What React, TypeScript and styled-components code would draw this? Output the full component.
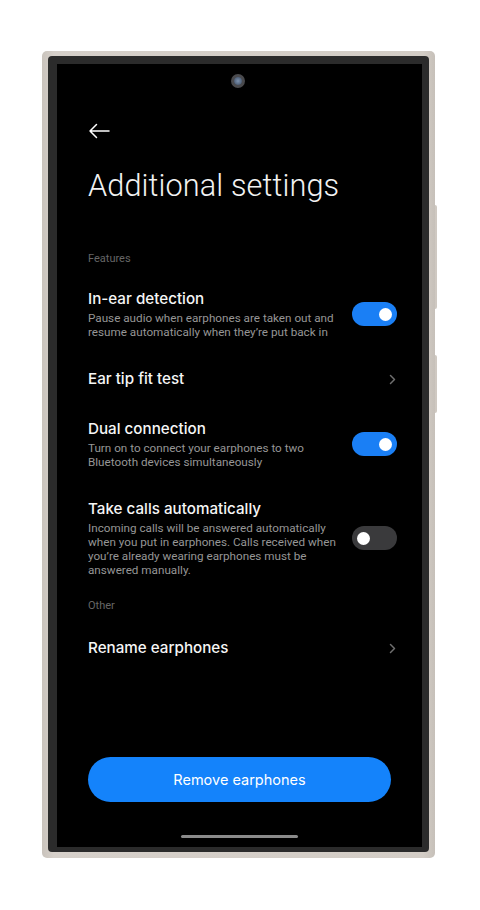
import React from "react";
import styled, { createGlobalStyle } from "styled-components";

const GlobalStyle = createGlobalStyle`
  html, body {
    margin: 0;
    padding: 0;
    background: #ffffff;
  }
  body {
    font-family: Roboto, "Noto Sans", "Liberation Sans", sans-serif;
    -webkit-font-smoothing: antialiased;
  }
`;

const Page = styled.div`
  width: 480px;
  height: 910px;
  padding: 51px 0 0 42px;
  box-sizing: border-box;
`;

const Frame = styled.div`
  position: relative;
  width: 393px;
  height: 807px;
  box-sizing: border-box;
  padding: 5px 6px 6px 6px;
  border-radius: 5px;
  background: linear-gradient(90deg, #c9c3bc 0%, #d6d0ca 3%, #d3cdc6 97%, #c6c0b9 100%);

  &::before,
  &::after {
    content: "";
    position: absolute;
    right: -2px;
    width: 2px;
    border-radius: 0 2px 2px 0;
    background: #cfc9c2;
  }
  &::before {
    top: 154px;
    height: 104px;
  }
  &::after {
    top: 304px;
    height: 58px;
  }
`;

const Bezel = styled.div`
  width: 100%;
  height: 100%;
  box-sizing: border-box;
  padding: 8px 7px 5px 9px;
  border-radius: 4px;
  background: #2b2b2b;
`;

const Screen = styled.div`
  position: relative;
  height: 100%;
  box-sizing: border-box;
  background: #000000;
  display: flex;
  flex-direction: column;
  padding: 0 25px 9px 31px;
  color: #ffffff;
`;

const Camera = styled.div`
  position: absolute;
  left: 174px;
  top: 10px;
  width: 14px;
  height: 14px;
  border-radius: 50%;
  box-sizing: border-box;
  border: 3px solid #4a4a4d;
  background: radial-gradient(circle, #7d93b0 0%, #56677f 60%, #2c3340 100%);
`;

const BackButton = styled.button`
  margin-top: 55px;
  width: 24px;
  height: 24px;
  padding: 0;
  border: none;
  background: none;
  display: flex;
  align-items: center;
  color: #ffffff;
`;

const Title = styled.h1`
  margin: 23px 0 0;
  font-size: 30.7px;
  line-height: 40px;
  font-weight: 300;
  letter-spacing: 0.1px;
  color: #f2f2f2;
`;

const SectionLabel = styled.div<{ $top: number; $bottom: number }>`
  margin: ${(p) => p.$top}px 0 ${(p) => p.$bottom}px;
  font-size: 11px;
  line-height: 16px;
  color: #666666;
`;

const Item = styled.div`
  display: flex;
  align-items: center;
  gap: 8px;
  padding: 15px 0;
`;

const ItemText = styled.div`
  flex: 1;
  min-width: 0;
`;

const ItemTitle = styled.div`
  font-family: Inter, Roboto, sans-serif;
  font-size: 15.2px;
  line-height: 20px;
  font-weight: 500;
  color: #f6f6f6;
`;

const ItemDesc = styled.div`
  margin-top: 2px;
  font-size: 11.7px;
  line-height: 14px;
  color: #969696;
`;

const Toggle = styled.div<{ $on: boolean }>`
  flex: none;
  width: 45px;
  height: 24px;
  border-radius: 12px;
  box-sizing: border-box;
  padding: 0 5px;
  display: flex;
  align-items: center;
  justify-content: ${(p) => (p.$on ? "flex-end" : "flex-start")};
  background: ${(p) => (p.$on ? "#1a7ff5" : "#3a3a3c")};

  &::after {
    content: "";
    width: 13px;
    height: 13px;
    border-radius: 50%;
    background: #ffffff;
  }
`;

const Chevron = styled.svg`
  flex: none;
  margin-right: 1px;
`;

const Spacer = styled.div`
  flex: 1;
`;

const PrimaryButton = styled.button`
  align-self: center;
  margin-left: -6px;
  width: 303px;
  height: 45px;
  border: none;
  border-radius: 23px;
  background: #1483fb;
  color: #ffffff;
  font-family: Inter, Roboto, sans-serif;
  font-size: 14.5px;
  font-weight: 400;
`;

const HomeBar = styled.div`
  align-self: center;
  margin: 33px 0 0 -6px;
  width: 117px;
  height: 3px;
  border-radius: 2px;
  background: #8a8a8a;
`;

type Setting = {
  title: string;
  desc?: string;
  toggle?: boolean;
};

const features: Setting[] = [
  {
    title: "In-ear detection",
    desc: "Pause audio when earphones are taken out and resume automatically when they\u2019re put back in",
    toggle: true,
  },
  { title: "Ear tip fit test" },
  {
    title: "Dual connection",
    desc: "Turn on to connect your earphones to two Bluetooth devices simultaneously",
    toggle: true,
  },
  {
    title: "Take calls automatically",
    desc: "Incoming calls will be answered automatically when you put in earphones. Calls received when you\u2019re already wearing earphones must be answered manually.",
    toggle: false,
  },
];

function SettingRow({ title, desc, toggle }: Setting) {
  return (
    <Item>
      <ItemText>
        <ItemTitle>{title}</ItemTitle>
        {desc && <ItemDesc>{desc}</ItemDesc>}
      </ItemText>
      {toggle === undefined ? (
        <Chevron width="7" height="11" viewBox="0 0 7 11" fill="none">
          <path d="M1.5 1.5L5.5 5.5L1.5 9.5" stroke="#6f6f6f" strokeWidth="1.5" strokeLinecap="round" strokeLinejoin="round" />
        </Chevron>
      ) : (
        <Toggle $on={toggle} />
      )}
    </Item>
  );
}

export default function App() {
  return (
    <Page>
      <GlobalStyle />
      <Frame>
        <Bezel>
          <Screen>
            <Camera />
            <BackButton aria-label="Back">
              <svg width="22" height="16" viewBox="0 0 22 16" fill="none">
                <path d="M21 8H2M8.5 1.5L2 8L8.5 14.5" stroke="#ffffff" strokeWidth="1.5" strokeLinecap="round" strokeLinejoin="round" />
              </svg>
            </BackButton>
            <Title>Additional settings</Title>
            <SectionLabel $top={45} $bottom={7}>Features</SectionLabel>
            {features.map((s) => (
              <SettingRow key={s.title} {...s} />
            ))}
            <SectionLabel $top={6} $bottom={9}>Other</SectionLabel>
            <SettingRow title="Rename earphones" />
            <Spacer />
            <PrimaryButton>Remove earphones</PrimaryButton>
            <HomeBar />
          </Screen>
        </Bezel>
      </Frame>
    </Page>
  );
}
